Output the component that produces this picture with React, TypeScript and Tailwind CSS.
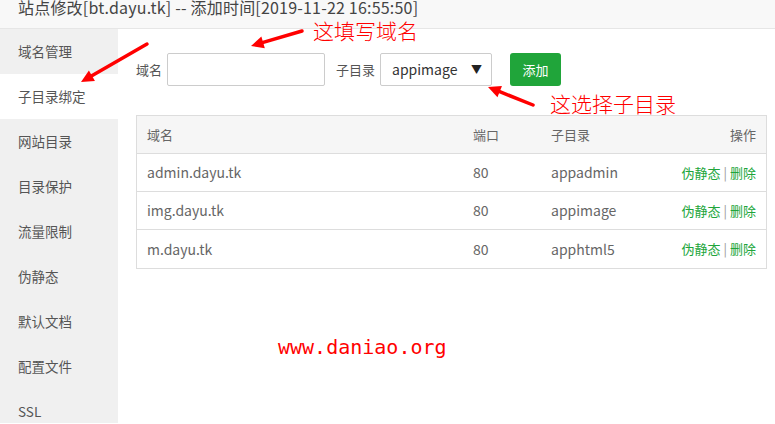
import { useState } from 'react'

const menu = ['域名管理', '子目录绑定', '网站目录', '目录保护', '流量限制', '伪静态', '默认文档', '配置文件', 'SSL']

const rows = [
  { domain: 'admin.dayu.tk', port: 80, dir: 'appadmin' },
  { domain: 'img.dayu.tk', port: 80, dir: 'appimage' },
  { domain: 'm.dayu.tk', port: 80, dir: 'apphtml5' },
]

// red annotation arrow, drawn from tail to head
function Arrow({ x1, y1, x2, y2 }: { x1: number; y1: number; x2: number; y2: number }) {
  const a = Math.atan2(y2 - y1, x2 - x1)
  const len = 14
  const w = 0.45
  const p1 = [x2 - len * Math.cos(a - w), y2 - len * Math.sin(a - w)]
  const p2 = [x2 - len * Math.cos(a + w), y2 - len * Math.sin(a + w)]
  const bx = x2 - 10 * Math.cos(a)
  const by = y2 - 10 * Math.sin(a)
  return (
    <g>
      <line x1={x1} y1={y1} x2={bx} y2={by} stroke="#f00" strokeWidth={3.5} strokeLinecap="round" />
      <polygon points={`${x2},${y2} ${p1[0]},${p1[1]} ${p2[0]},${p2[1]}`} fill="#f00" />
    </g>
  )
}

export default function App() {
  const [active] = useState(1)

  return (
    <div className="relative w-[775px] h-[424px] overflow-hidden bg-white text-[#555]" style={{ fontFamily: '"Noto Sans CJK SC", "Noto Sans", sans-serif' }}>
      {/* Title */}
      <div className="h-[30px] bg-[#f8f8f8] border-b border-[#e6e6e6] pl-[18px]">
        <div className="text-[16px] leading-[17px] -mt-[1px] text-[#444] tracking-[0.2px]">站点修改[bt.dayu.tk] -- 添加时间[2019-11-22 16:55:50]</div>
      </div>

      <div className="flex">
        {/* Sidebar */}
        <div className="w-[118px] h-[394px] bg-[#f0f0f0] shrink-0">
          {menu.map((m, i) => (
            <div key={m} className={`h-[45px] flex items-center pl-[18px] text-[13.5px] text-[#555] ${i === active ? 'bg-white text-[#333]' : ''}`}>
              {m}
            </div>
          ))}
        </div>

        {/* Content */}
        <div className="flex-1 pl-[18px] pr-[9px] pt-[24px]">
          <div className="flex items-center h-[33px]">
            <span className="text-[13px] text-[#555] mr-[5px]">域名</span>
            <div className="w-[158px] h-[33px] border border-[#ccc] rounded-[2px]" />
            <span className="text-[13px] text-[#555] ml-[11px] mr-[5px]">子目录</span>
            <div className="w-[112px] h-[33px] border border-[#ccc] rounded-[2px] flex items-center justify-between pl-[11px] pr-[9px]">
              <span className="text-[14px] text-[#333]">appimage</span>
              <span className="text-[11px] text-[#222]">▼</span>
            </div>
            <button className="ml-[18px] w-[51px] h-[33px] bg-[#20a53a] text-white text-[13px] rounded-[3px]">添加</button>
          </div>

          <div className="mt-[29px] w-[631px] border border-[#ddd] text-[13px] text-[#666]">
            <div className="grid grid-cols-[326px_78px_1fr_auto] h-[38px] items-center bg-[#f6f6f6] px-[10px] border-b border-[#ddd]">
              <span>域名</span>
              <span>端口</span>
              <span>子目录</span>
              <span className="text-right">操作</span>
            </div>
            {rows.map((r, i) => (
              <div key={r.domain} className={`grid grid-cols-[326px_78px_1fr_auto] h-[38px] items-center px-[10px] ${i < rows.length - 1 ? 'border-b border-[#ddd]' : ''}`}>
                <span className="text-[14px]">{r.domain}</span>
                <span className="text-[14px]">{r.port}</span>
                <span className="text-[14px]">{r.dir}</span>
                <span className="text-right text-[#20a53a]">
                  伪静态<span className="text-[#999] mx-[3px]">|</span>删除
                </span>
              </div>
            ))}
          </div>
        </div>
      </div>

      {/* Annotations */}
      <svg className="absolute left-0 top-0 pointer-events-none" width={775} height={424}>
        <Arrow x1={147} y1={44} x2={81} y2={82} />
        <Arrow x1={302} y1={31} x2={251} y2={46} />
        <Arrow x1={533} y1={105} x2={488} y2={87} />
      </svg>
      <div className="absolute left-[313px] top-[18px] text-[21px] leading-[24px] text-[#f00] font-light">这填写域名</div>
      <div className="absolute left-[550px] top-[91px] text-[21px] leading-[24px] text-[#f00] font-light">这选择子目录</div>
      <div className="absolute left-[278px] top-[335px] text-[20px] leading-[24px] text-[#f00]" style={{ fontFamily: '"DejaVu Sans Mono", monospace' }}>www.daniao.org</div>
    </div>
  )
}
